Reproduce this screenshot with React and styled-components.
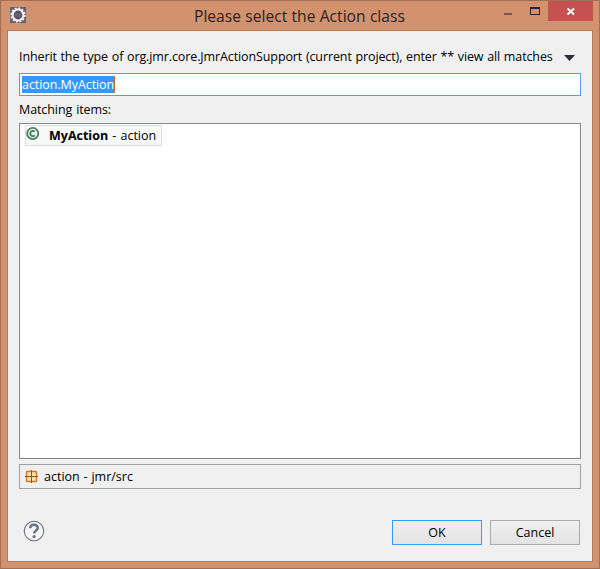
import React from "react";
import styled, { createGlobalStyle } from "styled-components";

const Global = createGlobalStyle`
  *, *::before, *::after { box-sizing: border-box; }
  body { margin: 0; font-family: "Open Sans", "Noto Sans", sans-serif; font-size: 12.5px; color: #000; }
`;

const Window = styled.div`
  width: 600px;
  height: 569px;
  display: flex;
  flex-direction: column;
  padding: 0 6px 6px;
  background: #d2926e;
  border: 1px solid #a36f54;
`;

const TitleBar = styled.header`
  height: 29px;
  flex: none;
  display: flex;
  align-items: flex-start;
  padding: 0 0 0 3px;
`;

const AppIcon = styled.svg`
  flex: none;
  margin-top: 6px;
`;

const Title = styled.h1`
  margin: 3px 0 0 168px;
  width: 304px;
  flex: none;
  font-size: 15.6px;
  line-height: 25px;
  font-weight: 400;
  word-spacing: 0.3px;
  color: #2b1f25;
  white-space: nowrap;
`;

const WindowButton = styled.button`
  width: ${(p) => p.$width}px;
  height: 20px;
  flex: none;
  padding: 0;
  border: 0;
  background: ${(p) => (p.$danger ? "#c75050" : "transparent")};
`;

const ButtonGlyph = styled.svg`
  display: block;
`;

const Content = styled.main`
  flex: 1;
  display: flex;
  flex-direction: column;
  padding: 15px 11px 0;
  background: #f0f0f0;
  border: 1px solid #b27c5e;
`;

const Text = styled.span`
  white-space: nowrap;
  letter-spacing: ${(p) => p.$spacing || 0}px;
  word-spacing: ${(p) => p.$words || 0}px;
  font-weight: ${(p) => (p.$bold ? 700 : 400)};
`;

const PromptRow = styled.div`
  height: 27px;
  display: flex;
  justify-content: space-between;
  line-height: 22px;
`;

const MenuArrow = styled.svg`
  margin: 9px 6px 0 0;
`;

const Field = styled.div`
  height: 23px;
  display: flex;
  align-items: center;
  padding-left: 2px;
  background: #fff;
  border: 1px solid #569de5;
`;

const Selection = styled.div`
  height: 17px;
  width: 93px;
  line-height: 17px;
  color: #fff;
  background: #3399ff;
  border-right: 1px solid #c46a22;
`;

const Label = styled.div`
  height: 27px;
  line-height: 27px;
`;

const List = styled.div`
  height: 336px;
  padding: 1px 5px;
  background: #fff;
  border: 1px solid #828790;
`;

const ListItem = styled.div`
  width: 137px;
  height: 21px;
  display: flex;
  align-items: flex-start;
  line-height: 19px;
  background: #f7f8f8;
  border: 1px solid #dedede;
`;

const ClassIcon = styled.svg`
  flex: none;
  margin-right: 9px;
`;

const StatusBar = styled.div`
  height: 25px;
  margin-top: 5px;
  display: flex;
  align-items: center;
  padding-left: 5px;
  gap: 6px;
  border: 1px solid #a0a0a0;
`;

const Footer = styled.footer`
  display: flex;
  align-items: flex-start;
  gap: 8px;
  margin-top: 31px;
  padding: 0 1px 0 4px;
`;

const HelpButton = styled.button`
  width: 22px;
  height: 22px;
  padding: 0;
  margin-right: auto;
  border: 0;
  background: none;
`;

const DialogButton = styled.button`
  width: 90px;
  height: 25px;
  padding: 0;
  font: inherit;
  line-height: 23px;
  color: #000;
  background: linear-gradient(#f0f0f0, #e3e3e3);
  border: 1px solid ${(p) => (p.$primary ? "#3399ff" : "#acacac")};
`;

export default function App() {
  return (
    <>
      <Global />
      <Window>
        <TitleBar>
          <AppIcon width="16" height="16" viewBox="0 0 16 16">
            <rect width="16" height="16" fill="#646271" />
            <circle cx="8" cy="8" r="6.8" fill="none" stroke="#f2f0ef" strokeWidth="1.6" strokeDasharray="2.1 1.46" />
            <circle cx="8" cy="8" r="5.4" fill="#505162" stroke="#f6f4f3" strokeWidth="2" />
            <path d="M4.5 7h7M4.5 9h7" stroke="#77727c" strokeWidth="1" />
          </AppIcon>
          <Title>Please select the Action class</Title>
          <WindowButton $width={27} aria-label="Minimize">
            <ButtonGlyph width="27" height="20"><path d="M6 12h8v2h-8z" fill="#7a555f" /></ButtonGlyph>
          </WindowButton>
          <WindowButton $width={23} aria-label="Maximize">
            <ButtonGlyph width="23" height="20"><path d="M5 6h10v8H5zM6 8v5h8V8z" fillRule="evenodd" fill="#30212a" /></ButtonGlyph>
          </WindowButton>
          <WindowButton $width={45} $danger aria-label="Close">
            <ButtonGlyph width="45" height="20"><path d="M19.5 7.5l6.5 6M26 7.5l-6.5 6" stroke="#fff" strokeWidth="1.9" /></ButtonGlyph>
          </WindowButton>
        </TitleBar>
        <Content>
          <PromptRow>
            <Text $spacing={-0.11} $words={0.6}>Inherit the type of org.jmr.core.JmrActionSupport (current project), enter ** view all matches</Text>
            <MenuArrow width="11" height="6"><path d="M0 0h11L5.5 6z" fill="#30303c" /></MenuArrow>
          </PromptRow>
          <Field><Selection><Text $spacing={-0.07}>action.MyAction</Text></Selection></Field>
          <Label><Text $spacing={-0.09} $words={0.8}>Matching items:</Text></Label>
          <List>
            <ListItem>
              <ClassIcon width="14" height="16" viewBox="0 0 14 16">
                <circle cx="6.7" cy="7.5" r="5.6" fill="#e9f2ec" stroke="#46805f" strokeWidth="1.8" />
                <path d="M8.7 5.7A2.6 2.6 0 1 0 8.7 9.3" fill="none" stroke="#3f7d5b" strokeWidth="1.9" />
              </ClassIcon>
              <Text $bold>MyAction</Text>
              <Text $words={0.9}>&nbsp;- action</Text>
            </ListItem>
          </List>
          <StatusBar>
            <svg width="13" height="13" viewBox="0 0 13 13">
              <rect x="1.5" y="1.5" width="10" height="10" rx="0.5" fill="#fbe3a2" stroke="#c97936" strokeWidth="1.4" />
              <path d="M6.5 0v13M0 6.5h13" stroke="#985022" />
            </svg>
            <Text $words={0.6}>action - jmr/src</Text>
          </StatusBar>
          <Footer>
            <HelpButton aria-label="Help">
              <ButtonGlyph width="22" height="22" viewBox="0 0 22 22">
                <circle cx="11" cy="11" r="9.7" fill="#f6f6f8" stroke="#6e7185" strokeWidth="1.1" />
                <path d="M7.2 8.2C7.4 3.5 15 4 14.7 8.1C14.6 10.6 11.2 10.3 11.2 13.4" fill="none" stroke="#6e7185" strokeWidth="2.5" />
                <circle cx="11.1" cy="16.6" r="1.6" fill="#6e7185" />
              </ButtonGlyph>
            </HelpButton>
            <DialogButton $primary><Text>OK</Text></DialogButton>
            <DialogButton><Text>Cancel</Text></DialogButton>
          </Footer>
        </Content>
      </Window>
    </>
  );
}
